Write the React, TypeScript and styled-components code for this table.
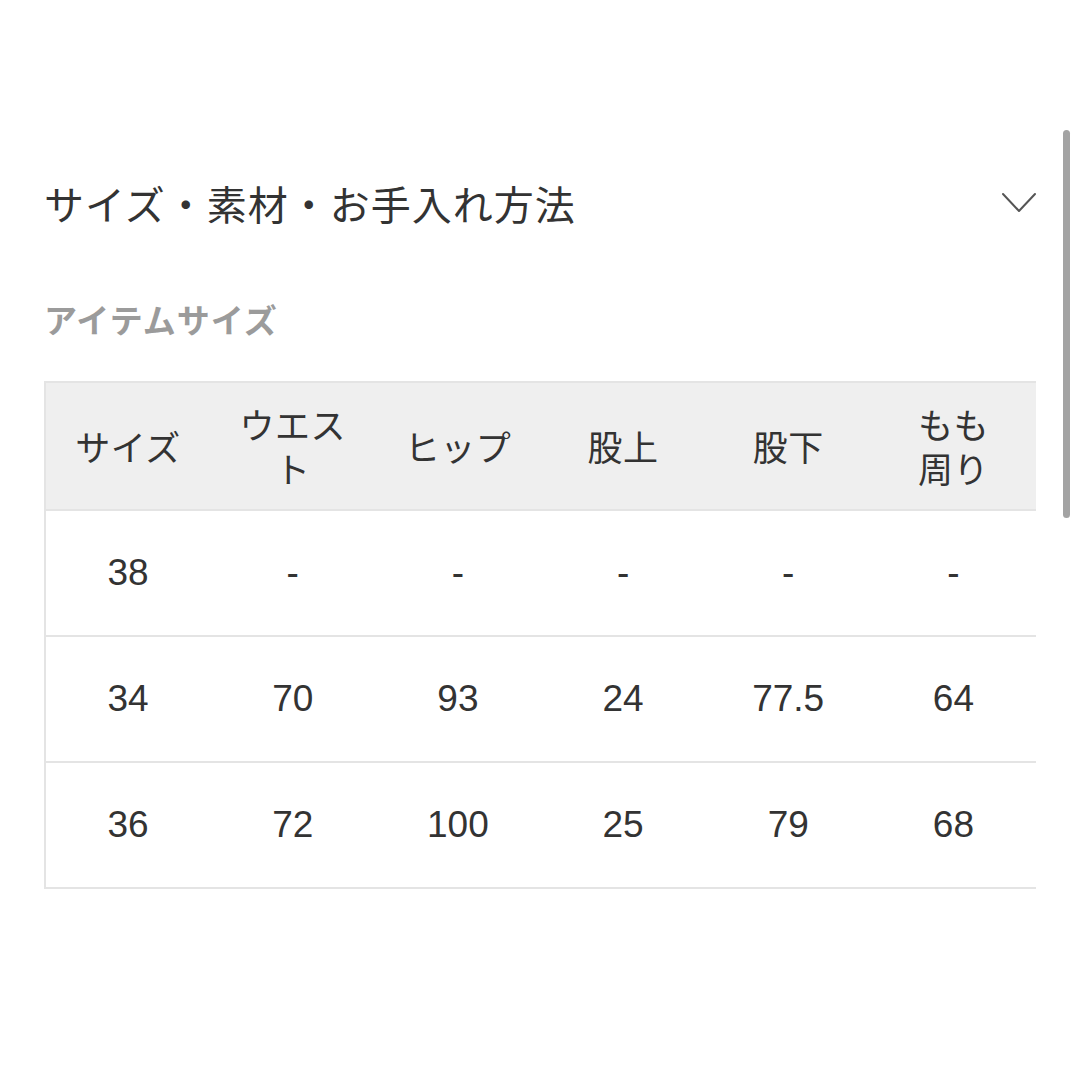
import React from "react";
import styled, { createGlobalStyle } from "styled-components";

const GlobalStyle = createGlobalStyle`
  html, body {
    margin: 0;
    padding: 0;
    background: #ffffff;
  }
  body {
    font-family: "Liberation Sans", "Noto Sans CJK JP", sans-serif;
    color: #333333;
  }
`;

const Page = styled.div`
  position: relative;
  width: 1080px;
  height: 1080px;
  box-sizing: border-box;
  padding: 174px 44px 0 44px;
  background: #ffffff;
  overflow: hidden;
`;

const TitleRow = styled.div`
  display: flex;
  align-items: center;
  justify-content: space-between;
`;

const Title = styled.h2`
  margin: 0;
  font-family: "Noto Sans CJK JP", sans-serif;
  font-weight: 400;
  font-size: 40px;
  line-height: 58px;
  color: #333333;
  letter-spacing: 1px;
`;

const Chevron = styled.svg`
  width: 34px;
  height: 22px;
  display: block;
`;

const Subtitle = styled.h3`
  margin: 63px 0 0 0;
  font-family: "Noto Sans CJK JP", sans-serif;
  font-weight: 700;
  font-size: 33px;
  line-height: 48px;
  letter-spacing: 1px;
  color: #9b9b9b;
`;

const Table = styled.table`
  margin-top: 38px;
  width: 992px;
  table-layout: fixed;
  border-collapse: collapse;
  border-left: 2px solid #e4e4e4;
`;

const HeadCell = styled.th`
  background: #efefef;
  height: 128px;
  box-sizing: border-box;
  padding: 0 10px;
  font-family: "Noto Sans CJK JP", sans-serif;
  font-weight: 400;
  font-size: 35px;
  line-height: 44px;
  letter-spacing: 0.5px;
  color: #333333;
  text-align: center;
  vertical-align: middle;
  border-top: 2px solid #e4e4e4;
  border-bottom: 2px solid #e4e4e4;
`;

const HeadLine = styled.span`
  display: block;
`;

const Cell = styled.td`
  height: 126px;
  box-sizing: border-box;
  padding: 0 10px;
  font-family: "Liberation Sans", "Noto Sans CJK JP", sans-serif;
  font-size: 37px;
  color: #333333;
  text-align: center;
  vertical-align: middle;
  border-bottom: 2px solid #e4e4e4;
`;

const ScrollThumb = styled.div`
  position: absolute;
  left: 1063px;
  top: 130px;
  width: 7px;
  height: 388px;
  border-radius: 4px;
  background: #a3a3a3;
`;

const headers: string[][] = [
  ["サイズ"],
  ["ウエス", "ト"],
  ["ヒップ"],
  ["股上"],
  ["股下"],
  ["もも", "周り"],
];
const rows = [
  ["38", "-", "-", "-", "-", "-"],
  ["34", "70", "93", "24", "77.5", "64"],
  ["36", "72", "100", "25", "79", "68"],
];

export default function App() {
  return (
    <>
      <GlobalStyle />
      <Page>
        <TitleRow>
          <Title>サイズ・素材・お手入れ方法</Title>
          <Chevron viewBox="0 0 34 22" fill="none">
            <polyline
              points="1,2 17,19 33,2"
              stroke="#555555"
              strokeWidth="2"
              strokeLinecap="round"
              strokeLinejoin="round"
            />
          </Chevron>
        </TitleRow>
        <Subtitle>アイテムサイズ</Subtitle>
        <Table>
          <thead>
            <tr>
              {headers.map((lines, i) => (
                <HeadCell key={i}>
                  {lines.map((l, k) => (
                    <HeadLine key={k}>{l}</HeadLine>
                  ))}
                </HeadCell>
              ))}
            </tr>
          </thead>
          <tbody>
            {rows.map((r, i) => (
              <tr key={i}>
                {r.map((c, j) => (
                  <Cell key={j}>{c}</Cell>
                ))}
              </tr>
            ))}
          </tbody>
        </Table>
        <ScrollThumb />
      </Page>
    </>
  );
}
